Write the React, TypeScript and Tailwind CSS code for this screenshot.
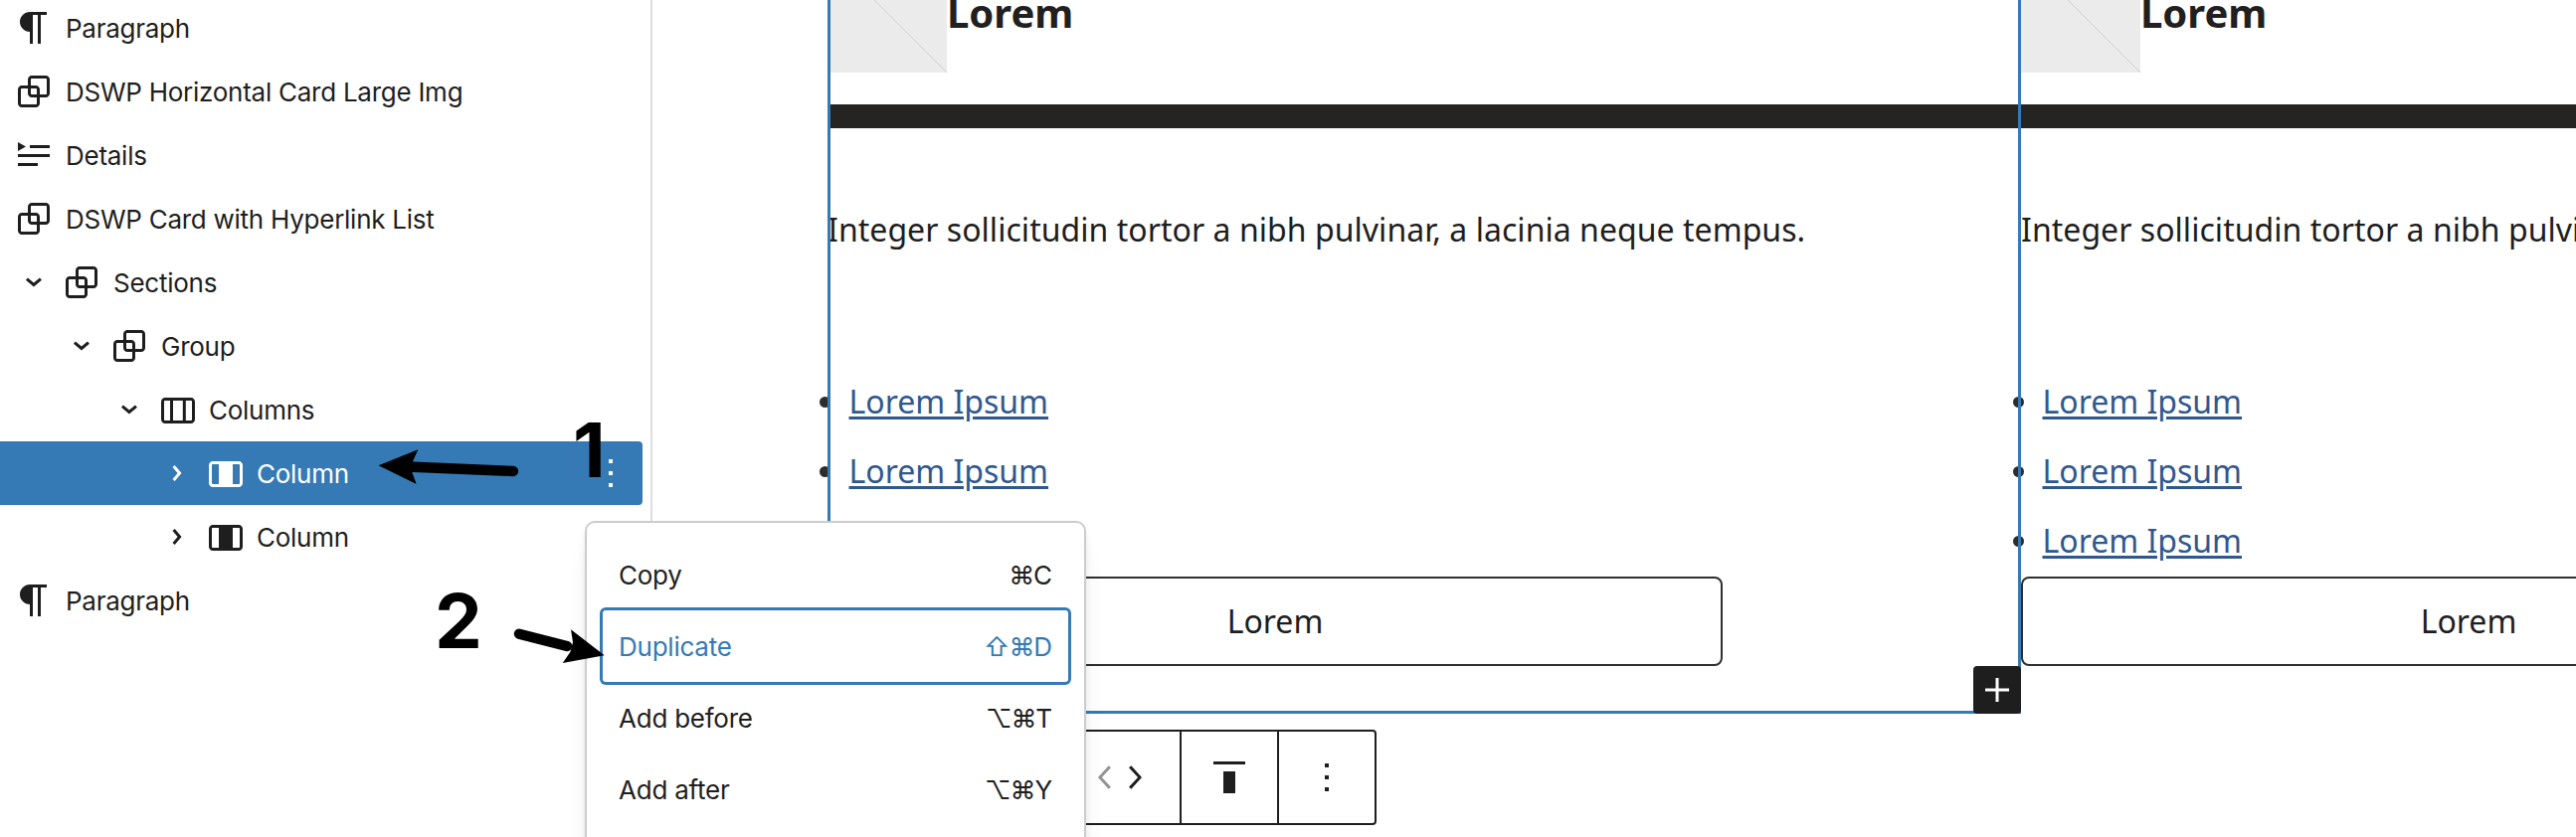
import React from "react";

type IconProps = { className?: string };

function Icon({ d, className = "" }: IconProps & { d: string }) {
  return (
    <svg viewBox="0 0 24 24" className={`size-12 shrink-0 fill-current ${className}`} aria-hidden="true">
      <path d={d} fillRule="evenodd" />
    </svg>
  );
}

const PARAGRAPH =
  "m9.99609 14v-.2251l.00391.0001v6.225h1.5v-14.5h2.5v14.5h1.5v-14.5h3v-1.5h-8.50391c-2.76142 0-5 2.23858-5 5 0 2.7614 2.23858 5 5 5z";
const GROUP =
  "M18 4h-7c-1.1 0-2 .9-2 2v3H6c-1.1 0-2 .9-2 2v7c0 1.1.9 2 2 2h7c1.1 0 2-.9 2-2v-3h3c1.1 0 2-.9 2-2V6c0-1.1-.9-2-2-2zm-4.5 14c0 .3-.2.5-.5.5H6c-.3 0-.5-.2-.5-.5v-7c0-.3.2-.5.5-.5h3V13c0 1.1.9 2 2 2h2.5v3zm0-4.5H11c-.3 0-.5-.2-.5-.5v-2.5H13c.3 0 .5.2.5.5v2.5zm5-.5c0 .3-.2.5-.5.5h-3V11c0-1.1-.9-2-2-2h-2.5V6c0-.3.2-.5.5-.5h7c.3 0 .5.2.5.5v7z";
const DETAILS = "M4 5.5L8 7.75L4 10zM10 7h10v1.5H10zM4 11.5h16V13H4zM4 16h10v1.5H4z";
const COLUMNS =
  "M19 6H6c-1.1 0-2 .9-2 2v9c0 1.1.9 2 2 2h13c1.1 0 2-.9 2-2V8c0-1.1-.9-2-2-2zm-4.1 1.5v10H10v-10h4.9zM5.5 17V8c0-.3.2-.5.5-.5h2.5v10H6c-.3 0-.5-.2-.5-.5zm14 0c0 .3-.2.5-.5.5h-2.6v-10H19c.3 0 .5.2.5.5v9z";
const COLUMN =
  "M19 6H6c-1.1 0-2 .9-2 2v9c0 1.1.9 2 2 2h13c1.1 0 2-.9 2-2V8c0-1.1-.9-2-2-2zM6 17.5c-.3 0-.5-.2-.5-.5V8c0-.3.2-.5.5-.5h3v10H6zm13.5-.5c0 .3-.2.5-.5.5h-3v-10h3c.3 0 .5.2.5.5v9z";
const CHEVRON =
  "M10.8622 8.04053L14.2805 12.0286L10.8622 16.0167L9.72327 15.0405L12.3049 12.0286L9.72327 9.01672L10.8622 8.04053Z";
const MORE = "M11 5h2v2h-2zM11 11h2v2h-2zM11 17h2v2h-2z";

type TreeItem = {
  label: string;
  icon: string;
  indent: string;
  toggle?: "open" | "closed";
  selected?: boolean;
};

const tree: TreeItem[] = [
  { label: "Paragraph", icon: PARAGRAPH, indent: "pl-2.5" },
  { label: "DSWP Horizontal Card Large Img", icon: GROUP, indent: "pl-2.5" },
  { label: "Details", icon: DETAILS, indent: "pl-2.5" },
  { label: "DSWP Card with Hyperlink List", icon: GROUP, indent: "pl-2.5" },
  { label: "Sections", icon: GROUP, indent: "pl-2.5", toggle: "open" },
  { label: "Group", icon: GROUP, indent: "pl-[58px]", toggle: "open" },
  { label: "Columns", icon: COLUMNS, indent: "pl-[106px]", toggle: "open" },
  { label: "Column", icon: COLUMN, indent: "pl-[154px]", toggle: "closed", selected: true },
  { label: "Column", icon: COLUMN, indent: "pl-[154px]", toggle: "closed" },
  { label: "Paragraph", icon: PARAGRAPH, indent: "pl-2.5" },
];

function TreeRow({ item }: { item: TreeItem }) {
  return (
    <li
      className={`flex h-16 items-center rounded-r pr-2 ${item.indent} ${
        item.selected ? "bg-[#357ab5] text-white" : "text-[#1e1e1e]"
      }`}
    >
      {item.toggle && <Icon d={CHEVRON} className={item.toggle === "open" ? "rotate-90" : ""} />}
      <Icon d={item.icon} />
      <span className="ml-2 flex-1 pt-0.5 whitespace-nowrap">{item.label}</span>
      {item.selected && <Icon d={MORE} />}
    </li>
  );
}

function ListView() {
  return (
    <aside className="w-[656px] shrink-0 border-r-2 border-[#dddddd] pr-2">
      <ul className="-mt-1 text-[26px] leading-8 tracking-[-0.26px]">
        {tree.map((item, i) => (
          <TreeRow key={i} item={item} />
        ))}
      </ul>
    </aside>
  );
}

function Card() {
  return (
    <section className="w-[1200px] shrink-0 font-['Noto_Sans',sans-serif] text-[32px] text-[#1e1e1e]">
      <header className="flex h-[73px] items-end">
        <svg viewBox="0 0 120 120" className="size-[120px] shrink-0 bg-[#ebebeb]" aria-hidden="true">
          <path d="M0 0L120 120" stroke="#cfcfcf" strokeWidth="1" />
        </svg>
        <h3 className="mb-[33px] text-[40px] leading-[54px] font-bold text-[#21201e]">Lorem</h3>
      </header>
      <hr className="mt-8 h-6 border-0 bg-[#252422]" />
      <p className="mt-[74px] leading-[56px] tracking-[0.04px] whitespace-nowrap">
        Integer sollicitudin tortor a nibh pulvinar, a lacinia neque tempus.
      </p>
      <ul className="mt-[110px] h-[211px]">
        {[0, 1, 2].map((n) => (
          <li key={n} className="flex h-[70px] items-center">
            <span className="-ml-2 size-[11px] rounded-full bg-[#2d2d2d]" />
            <a className="ml-[18.5px] leading-[70px] text-[#30588f] underline decoration-[3px] underline-offset-[3px]">
              Lorem Ipsum
            </a>
          </li>
        ))}
      </ul>
      <button className="flex h-[90px] w-[900px] items-center justify-center rounded-lg border-2 border-[#2f2f2f]">
        Lorem
      </button>
    </section>
  );
}

function Toolbar() {
  return (
    <div className="absolute top-[734px] left-[832px] flex h-24 w-[552px] justify-end rounded border-2 border-[#1e1e1e] bg-white text-[#1e1e1e]">
      <div className="flex items-center gap-[18px] pr-[38px]">
        <svg viewBox="8 6 6.6 12" className="h-6 w-[13px] fill-[#949494]">
          <path d="M14.6 7l-1.2-1L8 12l5.4 6 1.2-1-4.6-5z" />
        </svg>
        <svg viewBox="9.4 6 6.6 12" className="h-6 w-[13px] fill-current">
          <path d="M10.6 6L9.4 7l4.6 5-4.6 5 1.2 1 5.4-6z" />
        </svg>
      </div>
      <div className="flex w-[98px] items-center justify-center border-l-2 border-[#1e1e1e]">
        <Icon d="M4 4h16v1.5H4zM9 9h6v11H9z" />
      </div>
      <div className="flex w-[98px] items-center justify-center border-l-2 border-[#1e1e1e]">
        <Icon d={MORE} />
      </div>
    </div>
  );
}

const actions = [
  { label: "Copy", keys: "⌘C" },
  { label: "Duplicate", keys: "⇧⌘D", focused: true },
  { label: "Add before", keys: "⌥⌘T" },
  { label: "Add after", keys: "⌥⌘Y" },
];

function BlockMenu() {
  return (
    <div className="absolute top-[524px] left-[588px] h-[400px] w-[504px] rounded-[10px] border-2 border-[#cccccc] bg-white px-4 pt-4 text-[26px] leading-8 tracking-[-0.24px] text-[#1e1e1e] shadow-[0_4px_6px_rgba(0,0,0,0.05),0_8px_10px_rgba(0,0,0,0.04),0_24px_24px_rgba(0,0,0,0.03),0_32px_32px_rgba(0,0,0,0.02)]">
      {actions.map((a) => (
        <div
          key={a.label}
          className={`flex h-[72px] items-center justify-between rounded-[3px] px-4 pt-0.5 ${
            a.focused ? "text-[#357ab5] ring-3 ring-[#357ab5]" : ""
          }`}
        >
          <span>{a.label}</span>
          <span className="mr-px tracking-[-1.1px]">{a.keys}</span>
        </div>
      ))}
    </div>
  );
}

function Annotations() {
  return (
    <div className="pointer-events-none absolute inset-0 text-[76px] leading-none font-bold text-black">
      <span className="absolute top-[414px] left-[576px]">1</span>
      <span className="absolute top-[586px] left-[437px]">2</span>
      <svg viewBox="0 0 2590 842" className="absolute inset-0 h-full w-full" aria-hidden="true">
        <path d="M410 469.5L516 474M570 650L522 637.7" stroke="#000" strokeWidth="10.4" strokeLinecap="round" />
        <path d="M380.5 468.3L420.3 452.3L415 464.3L414 474.3L418.7 487Z" />
        <path d="M607.7 659.3L574 633.3L576 646L573.3 656L565.7 667Z" />
      </svg>
    </div>
  );
}

export default function App() {
  return (
    <div className="relative flex h-[842px] w-full overflow-hidden bg-white font-['Inter',sans-serif]">
      <ListView />
      <main className="flex flex-1 overflow-hidden pl-[176px]">
        <Card />
        <Card />
      </main>
      <div className="absolute -top-3 left-[832px] h-[730px] w-[1200px] border-3 border-[#357ab5]" />
      <div className="absolute top-[670px] left-[1984px] flex size-12 items-center justify-center rounded bg-[#1e1e1e] text-white">
        <Icon d="M11.25 6h1.5v5.25H18v1.5h-5.25V18h-1.5v-5.25H6v-1.5h5.25z" />
      </div>
      <Toolbar />
      <BlockMenu />
      <Annotations />
    </div>
  );
}
